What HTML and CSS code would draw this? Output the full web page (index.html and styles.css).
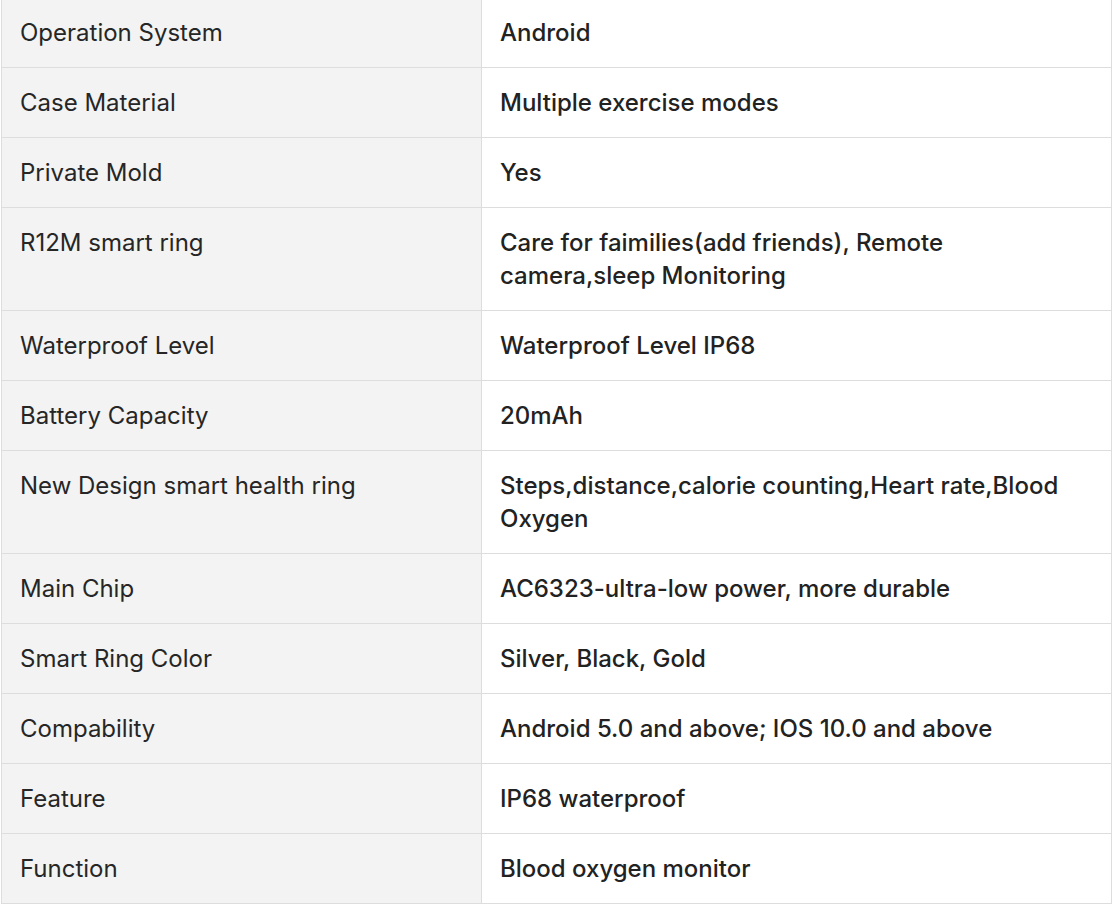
FILE: index.html
```html
<!DOCTYPE html>
<html lang="en">
<head>
<meta charset="utf-8">
<title>Specifications</title>
<link rel="stylesheet" href="styles.css">
</head>
<body>
<div class="wrap">
<table class="spec">
<tbody>
<tr><td class="key">Operation System</td><td class="val">Android</td></tr>
<tr><td class="key">Case Material</td><td class="val">Multiple exercise modes</td></tr>
<tr><td class="key">Private Mold</td><td class="val">Yes</td></tr>
<tr><td class="key">R12M smart ring</td><td class="val">Care for faimilies(add friends), Remote camera,sleep Monitoring</td></tr>
<tr><td class="key">Waterproof Level</td><td class="val">Waterproof Level IP68</td></tr>
<tr><td class="key">Battery Capacity</td><td class="val">20mAh</td></tr>
<tr><td class="key">New Design smart health ring</td><td class="val">Steps,distance,calorie counting,Heart rate,Blood Oxygen</td></tr>
<tr><td class="key">Main Chip</td><td class="val">AC6323-ultra-low power, more durable</td></tr>
<tr><td class="key">Smart Ring Color</td><td class="val">Silver, Black, Gold</td></tr>
<tr><td class="key">Compability</td><td class="val">Android 5.0 and above; IOS 10.0 and above</td></tr>
<tr><td class="key">Feature</td><td class="val">IP68 waterproof</td></tr>
<tr><td class="key">Function</td><td class="val">Blood oxygen monitor</td></tr>
</tbody>
</table>
</div>
</body>
</html>
```
FILE: styles.css
```css
html, body {
  margin: 0;
  padding: 0;
  background: #fff;
}
.wrap {
  padding-left: 1px;
  margin-top: -3px;
}
.spec {
  width: 1111px;
  border-collapse: collapse;
  table-layout: fixed;
  font-family: Inter, "Noto Sans", sans-serif;
  font-size: 24px;
  line-height: 33px;
  color: #222;
}
.spec td {
  border: 1px solid #dddddd;
  padding: 18px 20px 18px 18px;
  vertical-align: top;
  text-align: left;
}
.spec td.key {
  width: 441px;
  background: #f3f3f3;
  font-weight: 400;
  color: #262626;
}
.spec td.val {
  font-weight: 500;
  background: #fff;
}
```
